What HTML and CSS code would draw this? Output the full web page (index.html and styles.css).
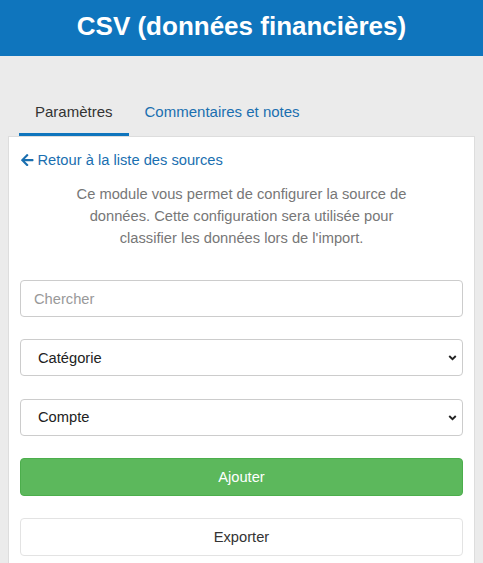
FILE: index.html
```html
<!DOCTYPE html>
<html lang="fr">
<head>
<meta charset="utf-8">
<title>CSV (données financières)</title>
<link rel="stylesheet" href="styles.css">
</head>
<body>
<header class="topbar"><h1 class="title">CSV (données financières)</h1></header>
<main class="page">
  <nav class="tabs">
    <a class="tab active" href="#">Paramètres</a>
    <a class="tab" href="#">Commentaires et notes</a>
  </nav>
  <section class="panel">
    <a class="back" href="#"><svg class="back-icon" viewBox="0 36 448 440" width="12.5" height="12.3"><path fill="currentColor" d="M257.5 445.1l-22.2 22.2c-9.4 9.4-24.6 9.4-33.9 0L7 273c-9.4-9.4-9.4-24.6 0-33.9L201.4 44.7c9.4-9.4 24.6-9.4 33.9 0l22.2 22.2c9.5 9.5 9.3 25-.4 34.3L136.6 216H424c13.3 0 24 10.7 24 24v32c0 13.3-10.7 24-24 24H136.6l120.5 114.8c9.8 9.3 10 24.8.4 34.3z"/></svg>Retour à la liste des sources</a>
    <p class="intro">Ce module vous permet de configurer la source de données. Cette configuration sera utilisée pour classifier les données lors de l'import.</p>
    <form class="form">
      <input class="field" type="text" placeholder="Chercher">
      <div class="select-wrap">
        <select class="field select"><option>Catégorie</option></select>
        <svg class="chev" viewBox="0 0 10 7" width="9" height="6"><path d="M1.2 1.2 L5 5 L8.8 1.2" fill="none" stroke="#222" stroke-width="2.2"/></svg>
      </div>
      <div class="select-wrap">
        <select class="field select"><option>Compte</option></select>
        <svg class="chev" viewBox="0 0 10 7" width="9" height="6"><path d="M1.2 1.2 L5 5 L8.8 1.2" fill="none" stroke="#222" stroke-width="2.2"/></svg>
      </div>
      <button class="btn btn-add" type="button">Ajouter</button>
      <button class="btn btn-export" type="button">Exporter</button>
    </form>
  </section>
</main>
</body>
</html>
```
FILE: styles.css
```css
html, body {
  margin: 0;
  padding: 0;
  background: #ebebeb;
  font-family: "Liberation Sans", Arial, sans-serif;
  font-size: 14.7px;
  color: #333;
  overflow: hidden;
}
.topbar {
  background: #0f75bd;
  height: 56px;
  box-sizing: border-box;
  padding-top: 10px;
}
.title {
  margin: 0;
  color: #fff;
  font-size: 26px;
  font-weight: bold;
  line-height: 32px;
  text-align: center;
}
.page {
  padding: 0 8px;
}
.tabs {
  display: flex;
  padding-top: 33px;
  padding-left: 11px;
}
.tab {
  display: block;
  padding: 13px 16px 11px;
  font-size: 15px;
  line-height: 20px;
  border-bottom: 3px solid transparent;
  text-decoration: none;
  color: #1a6fb0;
}
.tab.active {
  color: #333;
  border-bottom-color: #0f75bd;
}
.panel {
  background: #fff;
  border: 1px solid #ddd;
  padding: 12px 11px 30px;
}
.back {
  display: flex;
  align-items: center;
  gap: 4px;
  color: #1a6fb0;
  text-decoration: none;
  line-height: 20px;
  padding-left: 1px;
  margin-top: 1px;
}
.back-icon {
  display: block;
}
.intro {
  margin: 13px auto 31px;
  max-width: 345px;
  text-align: center;
  color: #777;
  line-height: 22px;
}
.form {
  display: flex;
  flex-direction: column;
  gap: 22.3px;
}
.field {
  display: block;
  width: 100%;
  box-sizing: border-box;
  height: 37px;
  border: 1px solid #ccc;
  border-radius: 4px;
  padding: 0 13px;
  font-family: inherit;
  font-size: 14.7px;
  color: #222;
  background: #fff;
  outline: none;
}
.field::placeholder {
  color: #999;
}
.select-wrap {
  position: relative;
}
.select {
  -webkit-appearance: none;
  appearance: none;
  padding-left: 17px;
}
.chev {
  position: absolute;
  right: 6px;
  top: 16px;
  pointer-events: none;
}
.btn {
  display: block;
  width: 100%;
  height: 38px;
  border-radius: 4px;
  font-family: inherit;
  font-size: 14.7px;
  cursor: pointer;
}
.btn-add {
  background: #5cb85c;
  border: 1px solid #4cae4c;
  color: #fff;
}
.btn-export {
  background: #fff;
  border: 1px solid #e3e3e3;
  color: #333;
}
```
